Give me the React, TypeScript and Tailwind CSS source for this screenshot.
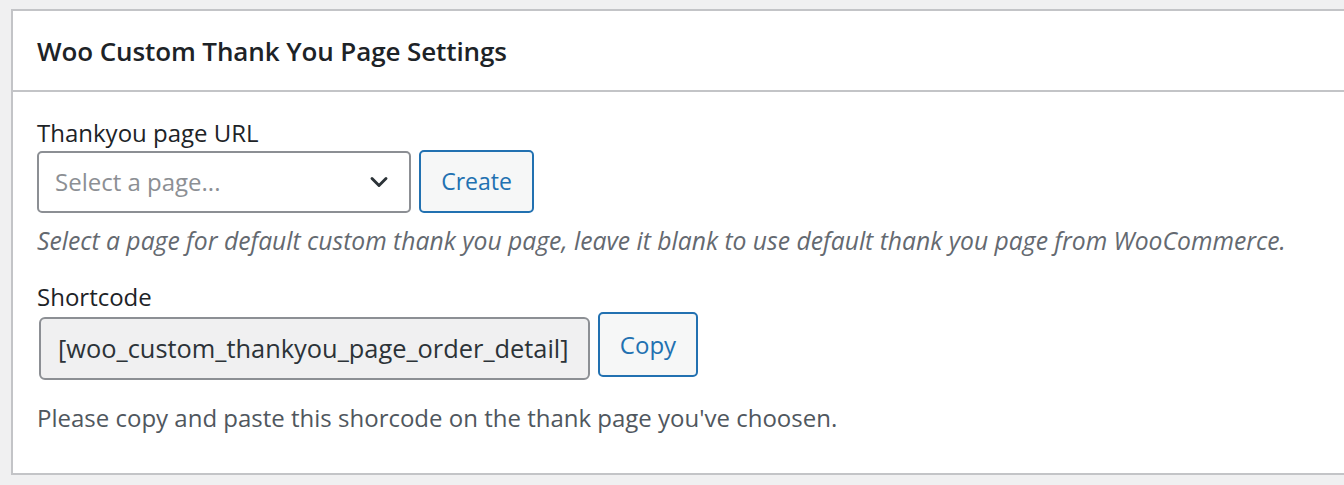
import { ChevronDown } from "lucide-react";

const font = { fontFamily: "'Open Sans', 'Noto Sans', sans-serif" };

export default function App() {
  return (
    <div
      className="h-[485px] w-full overflow-hidden bg-[#f0f0f1] pl-[11px] pt-[9px] text-[#1d2327]"
      style={font}
    >
      <div className="h-[466px] border-y-2 border-l-2 border-[#c3c4c7] bg-white">
        <div className="flex h-[81px] items-center border-b-2 border-[#c3c4c7] pl-6 pt-[2px]">
          <h2 className="text-[26px] font-semibold tracking-[-0.1px]">
            Woo Custom Thank You Page Settings
          </h2>
        </div>

        <div className="pl-6 pt-[26px]">
          <label className="block text-[24px] leading-[30px]">Thankyou page URL</label>
          <div className="mt-[2px] flex items-end gap-2">
            <div className="flex h-[62px] w-[374px] items-center justify-between rounded-[5px] border-2 border-[#8c8f94] pl-4 pr-4">
              <span className="text-[24px] text-[#8c8f94]">Select a page...</span>
              <ChevronDown className="h-7 w-7 text-[#2c3338]" strokeWidth={2.5} />
            </div>
            <button className="h-[63px] w-[115px] rounded-[5px] border-2 border-[#2271b1] bg-[#f6f7f7] text-[23px] text-[#2271b1]">
              Create
            </button>
          </div>
          <p className="mt-[12px] text-[24.7px] italic leading-[32px] text-[#646970]">
            Select a page for default custom thank you page, leave it blank to use default thank you page from WooCommerce.
          </p>

          <label className="mt-[25px] block text-[24px] leading-[30px]">Shortcode</label>
          <div className="flex items-start gap-2">
            <div className="ml-[2px] mt-[5px] flex h-[63px] w-[551px] items-center rounded-[6px] border-2 border-[#8c8f94] bg-[#f0f0f1] pl-[17px] text-[25.4px] text-[#2c3338]">
              [woo_custom_thankyou_page_order_detail]
            </div>
            <button className="h-[65px] w-[100px] rounded-[5px] border-2 border-[#2271b1] bg-[#f6f7f7] text-[24px] text-[#2271b1]">
              Copy
            </button>
          </div>
          <p className="mt-[22px] text-[24px] leading-[32px] text-[#50575e]">
            Please copy and paste this shorcode on the thank page you've choosen.
          </p>
        </div>
      </div>
    </div>
  );
}
